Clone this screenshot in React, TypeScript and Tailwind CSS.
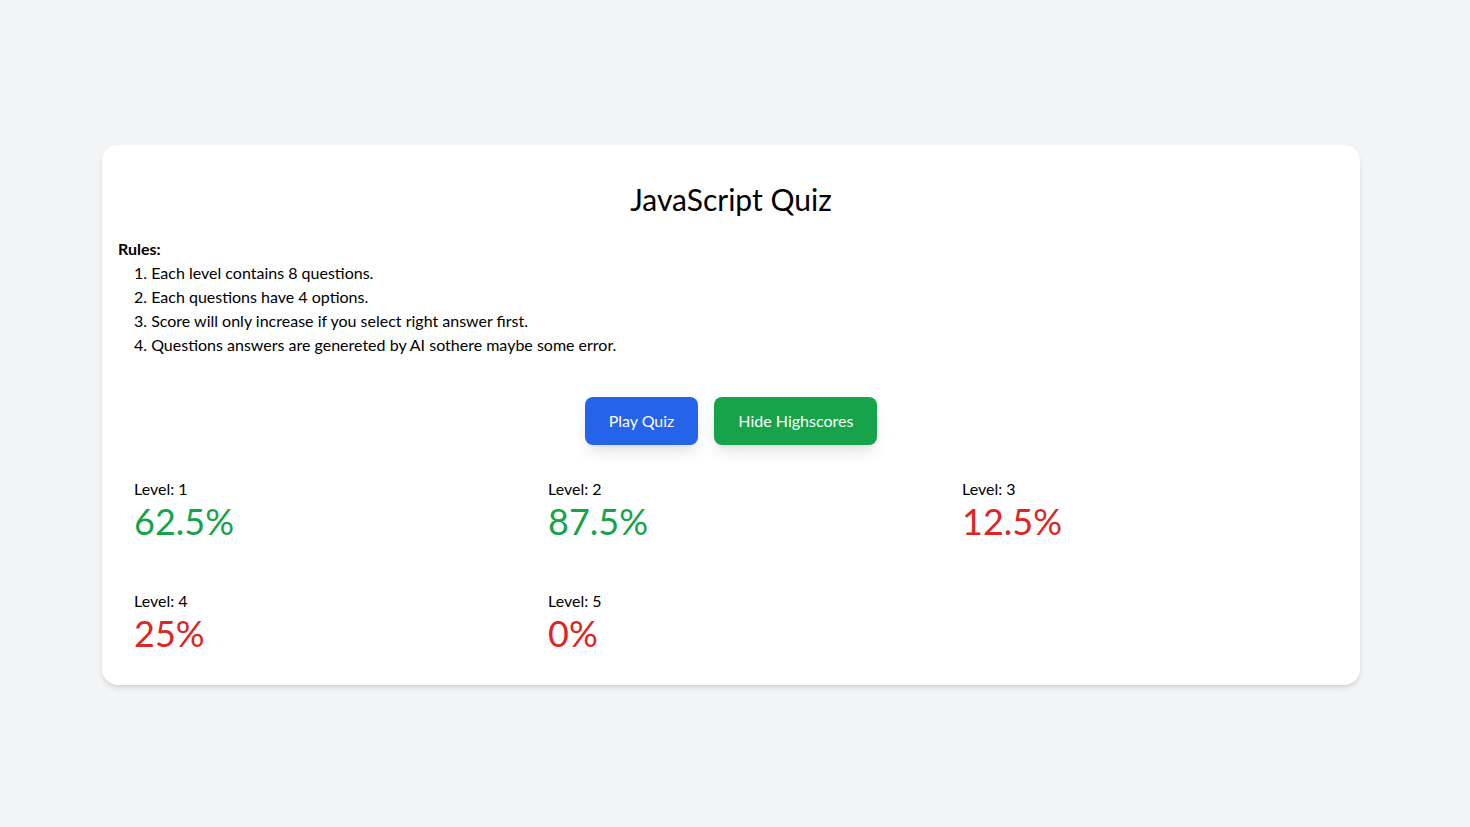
const rules = [
  'Each level contains 8 questions.',
  'Each questions have 4 options.',
  'Score will only increase if you select right answer first.',
  'Questions answers are genereted by AI sothere maybe some error.',
]

const scores = [
  { level: 1, pct: 62.5 },
  { level: 2, pct: 87.5 },
  { level: 3, pct: 12.5 },
  { level: 4, pct: 25 },
  { level: 5, pct: 0 },
]

export default function App() {
  return (
    <div
      className="min-h-screen bg-[#f3f4f6] flex items-center justify-center pr-2 pt-0.5 text-black"
      style={{ fontFamily: '"Segoe UI", Lato, "Noto Sans", sans-serif' }}
    >
      <div className="w-[1258px] bg-white rounded-2xl shadow-md p-4">
        <h1 className="text-3xl text-center mt-5 mb-5">JavaScript Quiz</h1>
        <div>
          <p className="font-bold">Rules:</p>
          <ol className="list-decimal list-inside pl-4">
            {rules.map((r) => (
              <li key={r}>{r}</li>
            ))}
          </ol>
        </div>
        <div className="flex justify-center gap-4 mt-10 mb-4">
          <button className="bg-[#2563eb] text-white px-6 py-3 rounded-lg shadow-lg">Play Quiz</button>
          <button className="bg-[#16a34a] text-white px-6 py-3 rounded-lg shadow-lg">Hide Highscores</button>
        </div>
        <div className="grid grid-cols-3 gap-4">
          {scores.map((s) => (
            <div key={s.level} className="p-4">
              <p>Level: {s.level}</p>
              <p className={`text-4xl ${s.pct >= 50 ? 'text-[#16a34a]' : 'text-[#dc2626]'}`}>{s.pct}%</p>
            </div>
          ))}
        </div>
      </div>
    </div>
  )
}
